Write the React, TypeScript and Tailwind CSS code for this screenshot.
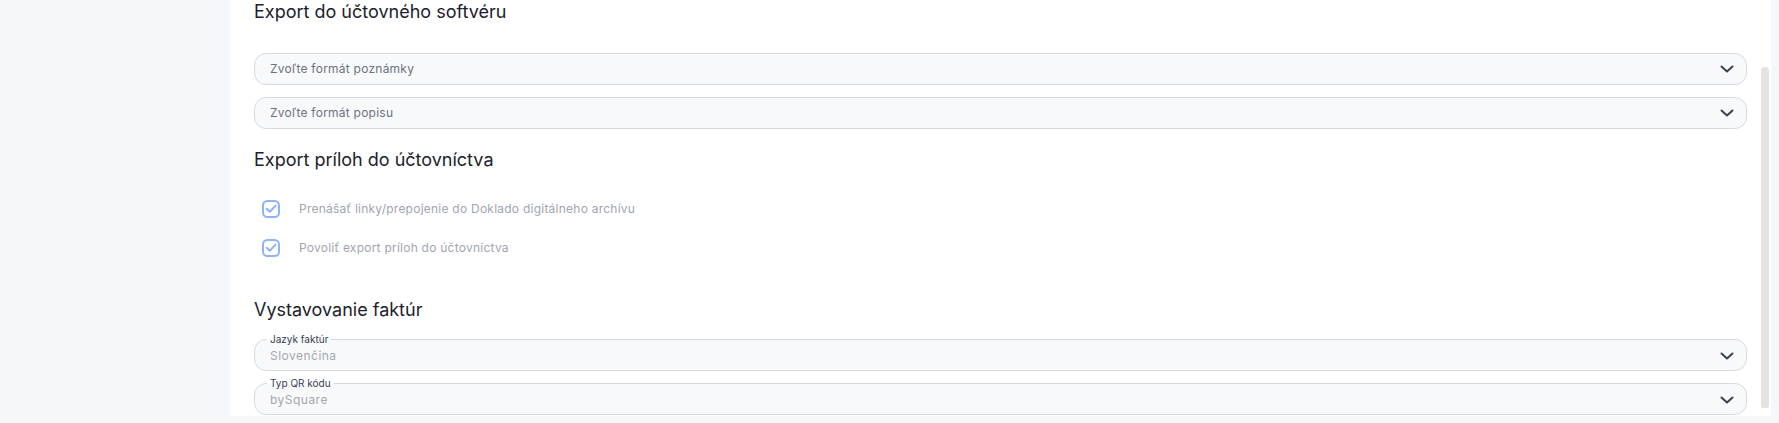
import type { ReactNode } from "react";

function Chevron() {
  return (
    <svg width="14" height="14" viewBox="0 0 14 14" fill="none" className="shrink-0">
      <path d="M1.5 4.5 7 9.5l5.5-5" stroke="#374151" strokeWidth="2" strokeLinecap="round" strokeLinejoin="round" />
    </svg>
  );
}

function Select({ placeholder }: { placeholder: string }) {
  return (
    <div className="flex h-[32px] items-center justify-between rounded-[12px] border border-[#d6d9de] bg-[#f8f9fb] pl-[15px] pr-[12px]">
      <span className="text-[12px] tracking-[0.02em] text-[#6b7280]">{placeholder}</span>
      <Chevron />
    </div>
  );
}

function LabeledSelect({ label, value }: { label: string; value: string }) {
  return (
    <div className="relative flex h-[32px] items-center justify-between rounded-[12px] border border-[#d6d9de] bg-[#f8f9fb] pt-[2px] pl-[15px] pr-[12px]">
      <span className="absolute -top-[6px] left-[12px] bg-[linear-gradient(to_bottom,#ffffff_50%,#f8f9fb_50%)] px-[3px] text-[10px] leading-[11px] text-[#374151]">
        {label}
      </span>
      <span className="text-[12px] tracking-[0.04em] text-[#a3a7ae]">{value}</span>
      <Chevron />
    </div>
  );
}

function Check({ children }: { children: ReactNode }) {
  return (
    <div className="flex h-[18px] items-center">
      <svg width="18" height="18" viewBox="0 0 18 18" fill="none" className="ml-[8px] shrink-0">
        <rect x="1" y="1" width="16" height="16" rx="4.5" stroke="#8db3f8" strokeWidth="2" fill="white" />
        <path d="M4.8 8.8 7.8 11.8 13.6 5.6" stroke="#8db3f8" strokeWidth="2" strokeLinecap="round" strokeLinejoin="round" />
      </svg>
      <span className="ml-[19px] text-[12px] tracking-[0.02em] text-[#a0a5af]">{children}</span>
    </div>
  );
}

export default function App() {
  return (
    <div className="flex h-[423px] w-[1779px] overflow-hidden bg-[#f5f8fb] font-['Inter',sans-serif]">
      <aside className="w-[230px] shrink-0" />
      <main className="flex h-[416px] w-[1541px] shrink-0 bg-white">
        <div className="flex-1 pl-[24px] pr-[14px]">
          <h2 className="h-[24px] text-[18px] leading-[24px] text-[#1c212b]">Export do účtovného softvéru</h2>
          <div className="mt-[29px] flex flex-col gap-[12px]">
            <Select placeholder="Zvoľte formát poznámky" />
            <Select placeholder="Zvoľte formát popisu" />
          </div>

          <h2 className="mt-[19px] h-[24px] text-[18px] leading-[24px] text-[#1c212b]">Export príloh do účtovníctva</h2>
          <div className="mt-[28px] flex flex-col gap-[21px]">
            <Check>Prenášať linky/prepojenie do Doklado digitálneho archívu</Check>
            <Check>Povoliť export príloh do účtovníctva</Check>
          </div>

          <h2 className="mt-[41px] h-[24px] text-[18px] leading-[24px] text-[#1c212b]">Vystavovanie faktúr</h2>
          <div className="mt-[17px] flex flex-col gap-[12px]">
            <LabeledSelect label="Jazyk faktúr" value="Slovenčina" />
            <LabeledSelect label="Typ QR kódu" value="bySquare" />
          </div>
        </div>
        <div className="mr-[2px] w-[8px] pt-[67px] pb-[8px]">
          <div className="h-full rounded-t-[4px] rounded-b-[2px] bg-[#e3e3e3]" />
        </div>
      </main>
    </div>
  );
}
